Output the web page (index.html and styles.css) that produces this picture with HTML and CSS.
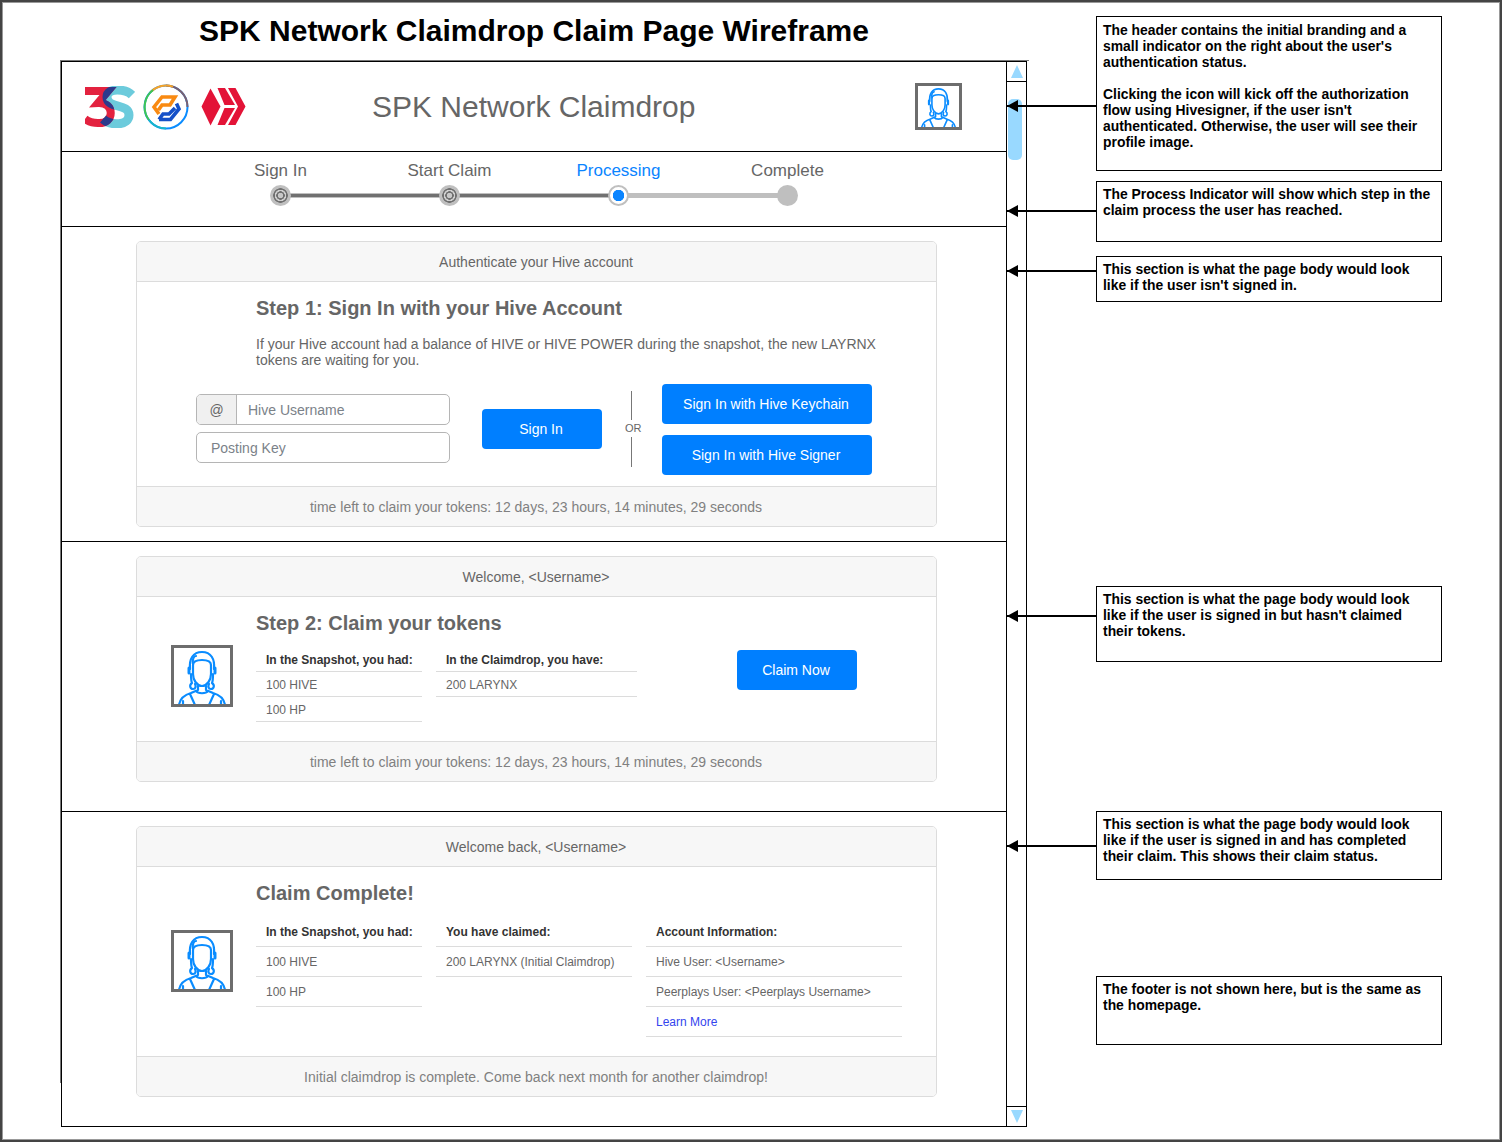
FILE: index.html
```html
<!DOCTYPE html>
<html>
<head>
	<title>SPK Network Claimdrop Claim Page Wireframe</title>
	<meta charset="utf-8">
	<link rel="stylesheet" href="styles.css">
</head>
<body>
	<svg class="defs" width="0" height="0">
		<symbol id="person" viewBox="3 3 56 56">
			<g fill="none" stroke="#0a8cff" stroke-width="2.200" stroke-linecap="round" stroke-linejoin="round">
				<path d="M22 20c0-3 3-5 9-5s9 2 9 5v9c0 6-4 12-9 12s-9-6-9-12z"/>
				<path d="M19 24c-1-10 3-17 12-17s13 7 12 17"/>
				<path d="M22 19c-1-5 1-8 3-8M20 29c0 4 0 7 1 9-3 2-2 6 1 6s3-3 2-5M42 29c0 4 0 7-1 9 3 2 2 6-1 6s-3-3-2-5"/>
				<path d="M18 23v5M44 23v5" stroke-width="3"/>
				<path d="M27 41v4l-7 3c-7 2-11 6-12 12M35 41v4l7 3c7 2 11 6 12 12M19 49l5 11M43 49l-5 11M12 60v-4M50 60v-4M25 46c2 3 10 3 12 0"/>
			</g>
		</symbol>
	</svg>

	<div class="sheet">
		<h1 class="sheet-title">SPK Network Claimdrop Claim Page Wireframe</h1>

		<div class="window">
			<div class="content">
				<header class="top">
					<div class="logos">
						<svg class="logo-3s" width="50" height="42" viewBox="0 0 50 42">
							<defs>
								<mask id="three-mask">
									<path d="M0 5H23L13 17C30 16 30 38 13 37 8 37 4 36 0 33" fill="none" stroke="#fff" stroke-width="8"/>
								</mask>
							</defs>
							<path d="M47 9C41 3 22 1 22 11 22 23 44 17 44 29 44 40 26 40 18 33" fill="none" stroke="#6ccbdc" stroke-width="9"/>
							<path d="M0 5H23L13 17C30 16 30 38 13 37 8 37 4 36 0 33" fill="none" stroke="#e3223f" stroke-width="8"/>
							<path d="M47 9C41 3 22 1 22 11 22 23 44 17 44 29 44 40 26 40 18 33" fill="none" stroke="#2b3a8c" stroke-width="9" mask="url(#three-mask)"/>
						</svg>
						<svg class="logo-pd" width="46" height="46" viewBox="0 0 46 46">
							<g fill="none" stroke-width="2">
								<circle cx="23" cy="23" r="21.500" stroke="#0a8cff"/>
								<path d="M44.500 23A21.500 21.500 0 0 0 23 1.500" stroke="#7b6070"/>
								<path d="M30 2.700A21.500 21.500 0 0 0 8 7.600" stroke="#f5a32a"/>
								<path d="M10 6A21.500 21.500 0 0 0 6 36" stroke="#3fc653"/>
								<path d="M6 36A21.500 21.500 0 0 0 23 44.500" stroke="#18b8c8"/>
							</g>
							<g fill="none" stroke-width="3.600" stroke-linejoin="miter">
								<path d="M16 30L11 23 19 13H32L27 21H19L15.500 26" stroke="#f98a12"/>
								<path d="M16 35.500H27.500L36 25 33.500 19.500M32 24L26 30H20L16 35.500" stroke="#1550c8"/>
							</g>
						</svg>
						<svg class="logo-hive" width="46" height="42" viewBox="0 0 46 42" fill="#e31337">
							<path d="M1.500 20.500L10.500 2.500 20.500 20.500 10.500 39.500z"/>
							<path d="M17.500 2H25L35 19H24.500z"/>
							<path d="M24.500 22H35L25 39H17.500z"/>
							<path d="M28 2H35.500L45.500 20.500 35.500 39H28L38 20.500z"/>
						</svg>
					</div>
					<div class="top-title">SPK Network Claimdrop</div>
					<div class="avatar avatar-small"><svg><use href="#person"/></svg></div>
				</header>

				<nav class="steps">
					<div class="step done"><span class="step-label">Sign In</span><span class="step-dot"></span></div>
					<div class="step done"><span class="step-label">Start Claim</span><span class="step-dot"></span></div>
					<div class="step current"><span class="step-label">Processing</span><span class="step-dot"></span></div>
					<div class="step"><span class="step-label">Complete</span><span class="step-dot"></span></div>
				</nav>

				<section class="panel panel-signin">
					<div class="card">
						<div class="card-head">Authenticate your Hive account</div>
						<div class="card-body">
							<h2 class="card-title">Step 1: Sign In with your Hive Account</h2>
							<p class="card-text">If your Hive account had a balance of HIVE or HIVE POWER during the snapshot, the new LAYRNX tokens are waiting for you.</p>
							<div class="signin-row">
								<div class="fields">
									<div class="field"><span class="field-addon">@</span><span class="field-text">Hive Username</span></div>
									<div class="field"><span class="field-text field-solo">Posting Key</span></div>
								</div>
								<a class="btn btn-signin" href="#">Sign In</a>
								<div class="or"><span>OR</span></div>
								<div class="btn-stack">
									<a class="btn btn-wide" href="#">Sign In with Hive Keychain</a>
									<a class="btn btn-wide" href="#">Sign In with Hive Signer</a>
								</div>
							</div>
						</div>
						<div class="card-foot">time left to claim your tokens: 12 days, 23 hours, 14 minutes, 29 seconds</div>
					</div>
				</section>

				<section class="panel panel-claim">
					<div class="card">
						<div class="card-head">Welcome, &lt;Username&gt;</div>
						<div class="card-body">
							<h2 class="card-title">Step 2: Claim your tokens</h2>
							<div class="info-row">
								<div class="avatar avatar-large"><svg><use href="#person"/></svg></div>
								<ul class="info info-1">
									<li class="info-head">In the Snapshot, you had:</li>
									<li>100 HIVE</li>
									<li>100 HP</li>
								</ul>
								<ul class="info info-2">
									<li class="info-head">In the Claimdrop, you have:</li>
									<li>200 LARYNX</li>
								</ul>
								<a class="btn btn-claim" href="#">Claim Now</a>
							</div>
						</div>
						<div class="card-foot">time left to claim your tokens: 12 days, 23 hours, 14 minutes, 29 seconds</div>
					</div>
				</section>

				<section class="panel panel-done">
					<div class="card">
						<div class="card-head">Welcome back, &lt;Username&gt;</div>
						<div class="card-body">
							<h2 class="card-title">Claim Complete!</h2>
							<div class="info-row">
								<div class="avatar avatar-large"><svg><use href="#person"/></svg></div>
								<ul class="info info-1">
									<li class="info-head">In the Snapshot, you had:</li>
									<li>100 HIVE</li>
									<li>100 HP</li>
								</ul>
								<ul class="info info-2">
									<li class="info-head">You have claimed:</li>
									<li>200 LARYNX (Initial Claimdrop)</li>
								</ul>
								<ul class="info info-3">
									<li class="info-head">Account Information:</li>
									<li>Hive User: &lt;Username&gt;</li>
									<li>Peerplays User: &lt;Peerplays Username&gt;</li>
									<li><a href="#">Learn More</a></li>
								</ul>
							</div>
						</div>
						<div class="card-foot">Initial claimdrop is complete. Come back next month for another claimdrop!</div>
					</div>
				</section>
			</div>

			<div class="scrollbar">
				<div class="scroll-btn scroll-up"><span class="tri tri-up"></span></div>
				<div class="scroll-track"><div class="scroll-thumb"></div></div>
				<div class="scroll-btn scroll-down"><span class="tri tri-down"></span></div>
			</div>
		</div>

		<!-- notes and arrows sit on the diagram canvas -->
		<div class="note note-1">
			<p>The header contains the initial branding and a small indicator on the right about the user's authentication status.</p>
			<p>Clicking the icon will kick off the authorization flow using Hivesigner, if the user isn't authenticated. Otherwise, the user will see their profile image.</p>
		</div>
		<div class="note note-2"><p>The Process Indicator will show which step in the claim process the user has reached.</p></div>
		<div class="note note-3"><p>This section is what the page body would look like if the user isn't signed in.</p></div>
		<div class="note note-4"><p>This section is what the page body would look like if the user is signed in but hasn't claimed their tokens.</p></div>
		<div class="note note-5"><p>This section is what the page body would look like if the user is signed in and has completed their claim. This shows their claim status.</p></div>
		<div class="note note-6"><p>The footer is not shown here, but is the same as the homepage.</p></div>

		<div class="arrow arrow-1"></div>
		<div class="arrow arrow-2"></div>
		<div class="arrow arrow-3"></div>
		<div class="arrow arrow-4"></div>
		<div class="arrow arrow-5"></div>
	</div>
</body>
</html>
```

FILE: styles.css
```css
* {
	box-sizing: border-box;
}
body {
	margin: 0;
	background-color: #fff;
	font-family: "Liberation Sans", Arial, sans-serif;
	color: #666;
}
.defs {
	position: absolute;
}
.sheet {
	position: relative;
	width: 1502px;
	height: 1142px;
	border: 2px solid #444;
	box-shadow: inset 0 0 0 1px #999;
	overflow: hidden;
}
.sheet-title {
	width: 1064px;
	height: 59px;
	margin: 0;
	padding-top: 11px;
	color: #000;
	font-size: 30px;
	line-height: 36px;
	text-align: center;
}

/* wireframe window */
.window {
	position: relative;
	display: flex;
	width: 966px;
	height: 1066px;
	margin-left: 59px;
	border: 1px solid #000;
}
/* grey edge left over from the shape under the window */
.window::before {
	content: "";
	position: absolute;
	top: -2px;
	left: -2px;
	width: 968px;
	height: 1022px;
	border-top: 1px solid #777;
	border-left: 1px solid #777;
}
.content {
	width: 945px;
}
.top {
	display: flex;
	align-items: center;
	height: 90px;
	border-bottom: 1px solid #000;
}
.logos {
	display: flex;
	align-items: center;
	width: 310px;
	padding-left: 23px;
}
.logo-pd {
	margin-left: 8px;
}
.logo-hive {
	margin-left: 11px;
}
.top-title {
	width: 323px;
	font-size: 30px;
	text-align: center;
	white-space: nowrap;
}
.avatar {
	flex: none;
	border: 3px solid #6d6d6d;
	background-color: #fff;
}
.avatar svg {
	display: block;
	width: 100%;
	height: 100%;
}
.avatar-small {
	width: 47px;
	height: 47px;
	margin-left: 220px;
}
.avatar-large {
	width: 62px;
	height: 62px;
	margin-right: 23px;
}

/* step indicator */
.steps {
	display: flex;
	height: 75px;
	padding-left: 134px;
	border-bottom: 1px solid #000;
}
.step {
	position: relative;
	display: flex;
	flex-direction: column;
	align-items: center;
	width: 169px;
	padding-top: 9px;
}
.step-label {
	font-size: 17px;
	line-height: 20px;
	white-space: nowrap;
}
.step-dot {
	position: relative;
	z-index: 1;
	width: 21px;
	height: 21px;
	margin-top: 4px;
	border-radius: 50%;
	background-color: #bfbfbf;
}
.step:not(:last-child)::after {
	content: "";
	position: absolute;
	top: 41px;
	left: 84px;
	width: 169px;
	height: 5px;
	background-color: #bfbfbf;
}
.step.done:not(:last-child)::after {
	background: linear-gradient(#bfbfbf 1px, #707070 1px, #707070 4px, #bfbfbf 4px);
}
.done .step-dot {
	background: radial-gradient(circle, #c8c8c8 0 2.500px, #707070 3px 4px, #d0d0d0 4.500px 5.500px, #707070 6px 7px, #bfbfbf 7.500px);
}
.current .step-label {
	color: #0a84ff;
}
.current .step-dot {
	border: 2px solid #bfbfbf;
	background: radial-gradient(circle, #0a84ff 0 5.500px, #fff 6px);
}

/* page body panels */
.panel {
	padding: 14px 0 0 74px;
	border-bottom: 1px solid #000;
}
.panel-signin {
	height: 315px;
}
.panel-claim {
	height: 270px;
}
.panel-done {
	height: 316px;
	border-bottom: 0;
}
.card {
	width: 801px;
	border: 1px solid #dcdcdc;
	border-radius: 5px;
	overflow: hidden;
}
.card-head {
	height: 40px;
	padding-right: 1px;
	border-bottom: 1px solid #dcdcdc;
	background-color: #f7f7f7;
	font-size: 14px;
	line-height: 40px;
	text-align: center;
}
.card-foot {
	height: 40px;
	padding-right: 1px;
	border-top: 1px solid #dcdcdc;
	background-color: #f7f7f7;
	color: #808080;
	font-size: 14px;
	line-height: 40px;
	text-align: center;
}
.card-title {
	margin: 0;
	padding: 14px 0 0 119px;
	font-size: 20px;
	line-height: 24px;
}
.card-text {
	width: 740px;
	margin: 16px 0 0;
	padding-left: 119px;
	font-size: 14px;
	line-height: 16px;
}
.panel-signin .card-body {
	height: 204px;
}
.panel-claim .card-body {
	height: 144px;
}
.panel-done .card-body {
	height: 189px;
}

/* sign in form */
.signin-row {
	display: flex;
	align-items: flex-start;
	margin: 16px 0 0 59px;
}
.fields {
	display: flex;
	flex-direction: column;
	gap: 7px;
	width: 254px;
	margin: 10px 32px 0 0;
}
.field {
	display: flex;
	height: 31px;
	border: 1px solid #b5b5b5;
	border-radius: 5px;
	overflow: hidden;
	color: #7b8289;
	font-size: 14px;
	line-height: 31px;
}
.field-addon {
	width: 40px;
	border-right: 1px solid #b5b5b5;
	background-color: #f0f0f0;
	color: #666;
	text-align: center;
}
.field-text {
	padding-left: 11px;
}
.field-solo {
	padding-left: 14px;
}
.btn {
	display: block;
	flex: none;
	width: 120px;
	height: 40px;
	padding-right: 2px;
	border-radius: 4px;
	background-color: #007fff;
	color: #fff;
	font-size: 14px;
	line-height: 40px;
	text-align: center;
	text-decoration: none;
}
.btn-signin {
	margin-top: 25px;
}
.btn-wide {
	width: 210px;
}
.btn-stack {
	display: flex;
	flex-direction: column;
	gap: 11px;
}
.or {
	display: flex;
	align-items: center;
	width: 1px;
	height: 76px;
	margin: 7px 30px 0 29px;
	background-color: #777;
}
.or span {
	margin: -2px 0 0 -6px;
	padding: 2px 0;
	background-color: #fff;
	font-size: 11px;
	line-height: 13px;
}

/* claim info tables */
.info-row {
	display: flex;
	align-items: flex-start;
	margin-left: 34px;
}
.panel-claim .info-row {
	margin-top: 14px;
}
.panel-claim .avatar-large {
	margin-top: -4px;
}
.panel-done .info-row {
	margin-top: 12px;
}
.panel-done .avatar-large {
	margin-top: 13px;
}
.info {
	margin: 0;
	padding: 0;
	list-style: none;
	font-size: 12px;
}
.info li {
	padding: 2px 0 0 10px;
	border-bottom: 1px solid #dcdcdc;
	line-height: 22px;
}
.panel-done .info li {
	line-height: 27px;
}
.info .info-head {
	padding-top: 0;
	color: #333;
	font-weight: bold;
	line-height: 22px;
}
.panel-done .info .info-head {
	padding-top: 2px;
	line-height: 27px;
}
.info a {
	color: #3344ee;
	text-decoration: none;
}
.info-1 {
	width: 166px;
	margin-right: 14px;
}
.info-2 {
	width: 201px;
}
.panel-done .info-2 {
	width: 196px;
	margin-right: 14px;
}
.info-3 {
	width: 256px;
}
.btn-claim {
	margin: 1px 0 0 100px;
}

/* fake scrollbar */
.scrollbar {
	display: flex;
	flex-direction: column;
	width: 20px;
	border-left: 1px solid #000;
}
.scroll-btn {
	display: flex;
	align-items: center;
	justify-content: center;
	height: 20px;
}
.scroll-up {
	border-bottom: 1px solid #000;
}
.scroll-down {
	border-top: 1px solid #000;
}
.scroll-track {
	flex: 1;
	padding: 17px 0 0 1px;
}
.scroll-thumb {
	width: 14px;
	height: 61px;
	border-radius: 5px;
	background-color: #99d9ff;
}
.tri {
	width: 0;
	height: 0;
	border-left: 6.500px solid transparent;
	border-right: 6.500px solid transparent;
}
.tri-up {
	border-bottom: 13px solid #99d9ff;
}
.tri-down {
	border-top: 13px solid #99d9ff;
}

/* annotations */
.note {
	position: absolute;
	left: 1094px;
	width: 346px;
	padding: 4px 6px;
	border: 1px solid #000;
	color: #000;
	font-size: 13.900px;
	font-weight: bold;
	line-height: 16px;
}
.note p {
	margin: 0 0 16px;
}
.note-1 {
	top: 14px;
	height: 155px;
	padding-top: 5px;
}
.note-2 {
	top: 179px;
	height: 61px;
}
.note-3 {
	top: 254px;
	height: 46px;
}
.note-4 {
	top: 584px;
	height: 76px;
}
.note-5 {
	top: 809px;
	height: 69px;
}
.note-6 {
	top: 974px;
	height: 69px;
}
.arrow {
	position: absolute;
	left: 1005px;
	width: 90px;
	height: 2px;
	background-color: #000;
}
.arrow::before {
	content: "";
	position: absolute;
	top: -5px;
	left: 0;
	border-top: 6px solid transparent;
	border-bottom: 6px solid transparent;
	border-right: 11px solid #000;
}
.arrow-1 {
	top: 103px;
}
.arrow-2 {
	top: 208px;
}
.arrow-3 {
	top: 268px;
}
.arrow-4 {
	top: 613px;
}
.arrow-5 {
	top: 843px;
}
```
